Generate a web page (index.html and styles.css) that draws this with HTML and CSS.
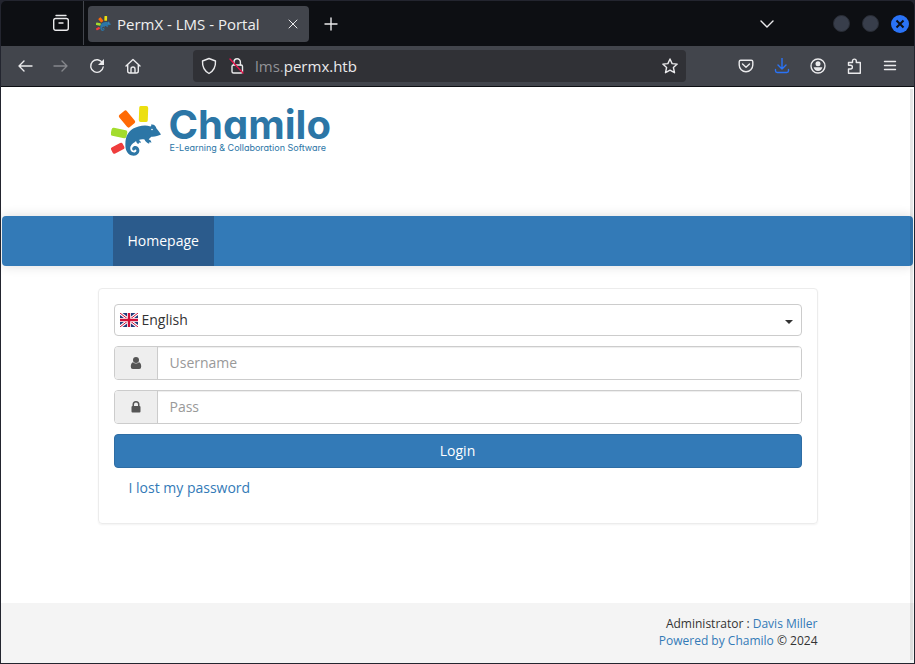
FILE: index.html
```html
<!DOCTYPE html>
<html lang="en">
<head>
<meta charset="utf-8">
<title>PermX - LMS - Portal</title>
<link rel="stylesheet" href="styles.css">
</head>
<body>
<svg class="defs" aria-hidden="true">
  <defs>
    <symbol id="chameleon" viewBox="0 0 50 50">
      <rect x="28" y="0" width="9" height="16" rx="2" fill="#ecdf10" transform="rotate(2 32 8)"/>
      <rect x="11" y="5" width="10" height="16" rx="2" fill="#ff6a05" transform="rotate(-40 16 13)"/>
      <rect x="0" y="23" width="16" height="8" rx="2" fill="#a3dc2d" transform="rotate(12 8 27)"/>
      <rect x="0" y="39" width="13" height="7" rx="2" fill="#ef3d3d" transform="rotate(-27 6 42)"/>
      <path fill="#2c76a6" d="M50 28.500c-.5-1-2.500-3.500-4.500-6-1-3-2.500-4.500-5.500-4 .5 1 .4 1.500-.5 2-4.500-1.500-8-.9-12 0-8 2-12 7-13 14.500-.2 3-.2 6 .3 8 1.200 4.200 4 6.700 8 6.700 3.500-.2 6-3 5.500-6-.4-3-3.500-4.500-5.800-3.200-1.700 1-1.800 3.200-.3 3.900 1.300.5 1.400-1.200 2.400-1 1.600.5.700 3-1.400 3-2.800 0-4.700-3-3.700-6 1-2.800 4-3.500 5.500-5.400.6 1.500.8 2.700 2.500 3l.5-1.500 1.800.6-.5-2.200-1.600-1c1.600-.6 4-.8 5.800-.4 1 2 2.300 3.600 4.600 4.200l.4-1.600 1.900.7-.5-2-2.200-1.500 2.600-2.600c3 .5 7.300-1.200 9.700-2.200z"/>
      <circle cx="41" cy="23.500" r=".8" fill="#fff"/>
    </symbol>
  </defs>
</svg>
<div class="window">
  <header class="tabs">
    <button class="icon recent" aria-label="Recent browsing"><svg width="18" height="18" viewBox="0 0 18 18"><path d="M4 1.500h10"/><rect x="1.700" y="4.500" width="14.600" height="11.800" rx="2"/><path d="M7 9h4"/></svg></button>
    <div class="tab">
      <svg class="favicon" width="15" height="15"><use href="#chameleon"/></svg>
      <span class="tab-title">PermX - LMS - Portal</span>
      <button class="icon" aria-label="Close tab"><svg class="thin" width="10" height="10" viewBox="0 0 10 10"><path d="M1 1l8 8M9 1L1 9"/></svg></button>
    </div>
    <button class="icon add" aria-label="New tab"><svg width="14" height="14" viewBox="0 0 14 14"><path d="M7 1v12M1 7h12"/></svg></button>
    <button class="icon list" aria-label="List all tabs"><svg width="14" height="8" viewBox="0 0 14 8"><path d="M1 1l6 6 6-6"/></svg></button>
    <div class="controls">
      <button class="dot" aria-label="Minimize"></button>
      <button class="dot" aria-label="Maximize"></button>
      <button class="dot close" aria-label="Close"><svg width="10" height="10" viewBox="0 0 10 10"><path d="M1.500 1.500l7 7M8.500 1.500l-7 7"/></svg></button>
    </div>
  </header>
  <div class="toolbar">
    <div class="navigation">
      <button class="icon" aria-label="Back"><svg width="16" height="16" viewBox="0 0 16 16"><path d="M15 8H2M7 3L2 8l5 5"/></svg></button>
      <button class="icon disabled" aria-label="Forward" disabled><svg width="16" height="16" viewBox="0 0 16 16"><path d="M1 8h13M9 3l5 5-5 5"/></svg></button>
      <button class="icon" aria-label="Reload"><svg width="16" height="16" viewBox="0 0 16 16"><path d="M13.500 5A6.300 6.300 0 1 0 14.200 9"/><path class="solid" d="M15 1v6H9z"/></svg></button>
      <button class="icon" aria-label="Home"><svg width="16" height="16" viewBox="0 0 16 16"><path d="M1 8l7-6.500L15 8M2.700 6.800V13q0 2 2 2h6.600q2 0 2-2V6.800M6 15v-4q0-2 2-2t2 2v4"/></svg></button>
    </div>
    <div class="address">
      <svg width="16" height="18" viewBox="0 0 16 18"><path d="M8 1.500l6.500 2.500c.3 6-2 10-6.500 12.500C3.500 14 1.200 10 1.500 4z"/></svg>
      <svg width="16" height="18" viewBox="0 0 16 18"><rect x="3" y="8" width="10.500" height="8" rx="1.500"/><path d="M5 8V5a3.200 3.200 0 0 1 6.400 0v3"/><path class="strike" d="M1 2l13 14"/></svg>
      <span class="url"><span class="sub">lms.</span>permx.htb</span>
      <button class="icon" aria-label="Bookmark this page"><svg width="16" height="16" viewBox="0 0 16 16"><path d="M8 1l2.100 4.600 5.100.5-3.800 3.400 1.100 5.200L8 12.200l-4.500 2.500 1.100-5.200L.8 6.100l5.100-.5z"/></svg></button>
    </div>
    <div class="actions">
      <button class="icon" aria-label="Pocket"><svg width="16" height="16" viewBox="0 0 16 16"><path d="M2.700 2.200h10.600q1.500 0 1.500 1.500V7a6.800 6.800 0 0 1-13.600 0V3.700q0-1.500 1.500-1.500zM4.500 6L8 9.300 11.500 6"/></svg></button>
      <button class="icon download" aria-label="Downloads"><svg width="16" height="16" viewBox="0 0 16 16"><path d="M8 0v11M4 7l4 4 4-4M1.500 11.500v1.300q0 1.700 1.700 1.700h9.600q1.700 0 1.700-1.700v-1.300"/></svg></button>
      <button class="icon" aria-label="Account"><svg width="16" height="16" viewBox="0 0 16 16"><circle cx="8" cy="8" r="7"/><circle class="solid" cx="8" cy="5.800" r="2.500"/><path class="solid" d="M3.600 9.300h8.800Q11.500 13 8 13T3.600 9.300z"/></svg></button>
      <button class="icon" aria-label="Extensions"><svg width="16" height="16" viewBox="0 0 16 16"><path d="M2.500 15.200V11h2a1.900 1.900 0 0 0 0-3.800h-2V4.500h4V3a1.900 1.900 0 0 1 3.800 0v1.500h4v10.700z"/></svg></button>
      <button class="icon" aria-label="Application menu"><svg width="16" height="14" viewBox="0 0 16 14"><path d="M2.500 2.500h11M2.500 6.500h11M2.500 10.500h11"/></svg></button>
    </div>
  </div>
  <div class="page">
    <div class="brand container">
      <a class="logo" href="#" aria-label="Chamilo">
        <svg width="50" height="50"><use href="#chameleon"/></svg>
        <span class="logo-text"><span class="logo-name">Chamilo</span><span class="logo-tag">E-Learning &amp; Collaboration Software</span></span>
      </a>
    </div>
    <nav class="navbar"><div class="container"><a href="#">Homepage</a></div></nav>
    <main class="content container">
      <form class="panel">
        <div class="language">
          <svg width="18" height="14" viewBox="0 0 18 14"><path fill="#233b7c" d="M0 0h18v14H0z"/><path stroke="#fff" stroke-width="3" d="M0 0l18 14M18 0L0 14"/><path stroke="#d0103a" d="M0 0l18 14M18 0L0 14"/><path stroke="#fff" stroke-width="4" d="M9 0v14M0 7h18"/><path stroke="#d0103a" stroke-width="2.400" d="M9 0v14M0 7h18"/></svg>
          <select aria-label="Language"><option>English</option></select>
          <svg class="caret" width="8" height="4" viewBox="0 0 8 4"><path fill="#333" d="M0 0h8L4 4z"/></svg>
        </div>
        <div class="field">
          <label for="login"><svg width="12" height="14" viewBox="0 0 12 14"><circle cx="6" cy="4" r="3"/><path d="M3 6.200Q6 8.800 9 6.200q2.200.5 2.200 4.500 0 2.300-2 2.300H2.800q-2 0-2-2.300 0-4 2.200-4.500z"/></svg></label>
          <input id="login" type="text" placeholder="Username" aria-label="Username">
        </div>
        <div class="field">
          <label for="password"><svg width="12" height="14" viewBox="0 0 12 14"><path fill-rule="evenodd" d="M2.500 6V4.500a3.500 3.500 0 0 1 7 0V6q1 0 1 1v4.500q0 1-1 1h-7q-1 0-1-1V7q0-1 1-1zM4 6h4V4.500a2 2 0 0 0-4 0z"/></svg></label>
          <input id="password" type="password" placeholder="Pass" aria-label="Pass">
        </div>
        <button class="submit" type="button">Login</button>
        <a class="lost" href="#">I lost my password</a>
      </form>
    </main>
    <footer><div class="container">
      <p>Administrator : <a href="#">Davis Miller</a></p>
      <p><a href="#">Powered by Chamilo</a> © 2024</p>
    </div></footer>
    <div class="scrollbar"></div>
  </div>
</div>
</body>
</html>
```
FILE: styles.css
```css
* { box-sizing: border-box; }
body { margin: 0; background: #23252f; font: 14px/20px "Open Sans", sans-serif; color: #333; }
a { color: #337ab7; text-decoration: none; }
p { margin: 0; }
button, input, select { font: inherit; color: inherit; }
svg { flex: none; display: block; }
.defs { position: absolute; width: 0; height: 0; }

.window { display: flex; flex-direction: column; min-height: 100vh; border: 1px solid #23252f; border-radius: 6px 6px 0 0; overflow: hidden; }
.tabs, .toolbar { font-size: 15px; color: #f0f0f0; display: flex; align-items: center; }
.icon { display: flex; align-items: center; justify-content: center; padding: 0; border: 0; background: none; color: #eaeaec; }
.icon svg, .address > svg { fill: none; stroke: currentColor; stroke-width: 1.4; stroke-linecap: round; stroke-linejoin: round; }
.icon .solid { fill: currentColor; stroke: none; }
.icon .thin { stroke-width: 1; }

.tabs { height: 45px; background: #0d0f13; padding-right: 5px; }
.recent { width: 83px; height: 44px; padding-left: 37px; border-right: 1px solid #42454c; align-self: flex-start; }
.tab { display: flex; align-items: center; width: 221px; height: 36px; margin-left: 4px; padding: 0 11px 0 8px; gap: 6px; border-radius: 4px; background: #42454c; }
.tab-title { flex: 1; white-space: nowrap; }
.add { margin-left: 15px; }
.list { margin-left: auto; }
.controls { display: flex; gap: 12px; margin-left: 59px; align-items: center; }
.dot { width: 17px; height: 17px; padding: 0; border: 1px solid #292d36; border-radius: 50%; background: #383e4b; display: flex; align-items: center; justify-content: center; }
.close { width: 18px; height: 18px; border: 0; background: #2a73f6; }
.close svg { stroke: #0d0f13; stroke-width: 2; }

.toolbar { height: 41px; background: #42454c; border-bottom: 1px solid #0d0f13; padding: 0 16px; }
.navigation, .actions { display: flex; align-items: center; gap: 20px; }
.disabled { color: #85878c; }
.address { flex: 1; display: flex; align-items: center; height: 32px; margin: 0 52px; padding: 0 8px; gap: 12px; border-radius: 4px; background: #303136; color: #eaeaec; }
.address .strike { stroke: #e2124a; }
.url { flex: 1; white-space: nowrap; margin-left: -2px; }
.sub { color: #929397; }
.download { color: #2a73f6; }

.page { position: relative; flex: 1; display: flex; flex-direction: column; background: #fff; }
.container { width: 100%; max-width: 750px; margin: 0 auto; padding: 0 15px; }
.brand { height: 129px; padding: 19px 28px 0; }
.logo { display: inline-flex; align-items: flex-start; gap: 8px; color: #2c76a6; font-family: Inter, sans-serif; font-feature-settings: "cv11"; white-space: nowrap; }
.logo-text { display: flex; flex-direction: column; }
.logo-name { font-size: 40px; line-height: 38px; font-weight: 700; }
.logo-tag { font-size: 9px; line-height: 8px; padding-left: 1px; }
.navbar { margin: 0 1px; border-radius: 4px; background: #337ab7; box-shadow: 0 0 12px #00000024; }
.navbar .container { display: flex; padding: 0 30px; }
.navbar a { padding: 15px; background: #2b5b8c; color: #fff; }
.content { margin-top: 22px; }
.panel { display: flex; flex-direction: column; gap: 10px; padding: 15px 15px 25px; border: 1px solid #ececec; border-radius: 4px; box-shadow: 0 1px 2px #0000000d; }
.language { position: relative; display: flex; align-items: center; height: 32px; padding-left: 5px; border: 1px solid #ccc; border-radius: 4px; }
.language select { flex: 1; height: 30px; padding: 0 20px 0 4px; border: 0; background: none; appearance: none; }
.caret { position: absolute; right: 8px; top: 15px; pointer-events: none; }
.field { display: flex; height: 34px; border: 1px solid #ccc; border-radius: 4px; overflow: hidden; }
.field label { display: flex; align-items: center; justify-content: center; width: 43px; background: #eee; border-right: 1px solid #ccc; fill: #555; }
.field input { flex: 1; min-width: 0; padding: 0 12px; border: 0; background: #fff; box-shadow: inset 0 1px 1px #00000013; }
.field input::placeholder { color: #999; opacity: 1; }
.submit { height: 34px; border: 1px solid #2e6da4; border-radius: 4px; background: #337ab7; color: #fff; }
.lost { align-self: flex-start; padding: 0 15px; }
footer { margin-top: auto; padding: 12px 0 14px; background: #f4f4f4; font-size: 12px; line-height: 17px; text-align: right; }
.scrollbar { position: absolute; top: 2px; right: 1px; bottom: 3px; width: 3px; background: #00000018; }
```
